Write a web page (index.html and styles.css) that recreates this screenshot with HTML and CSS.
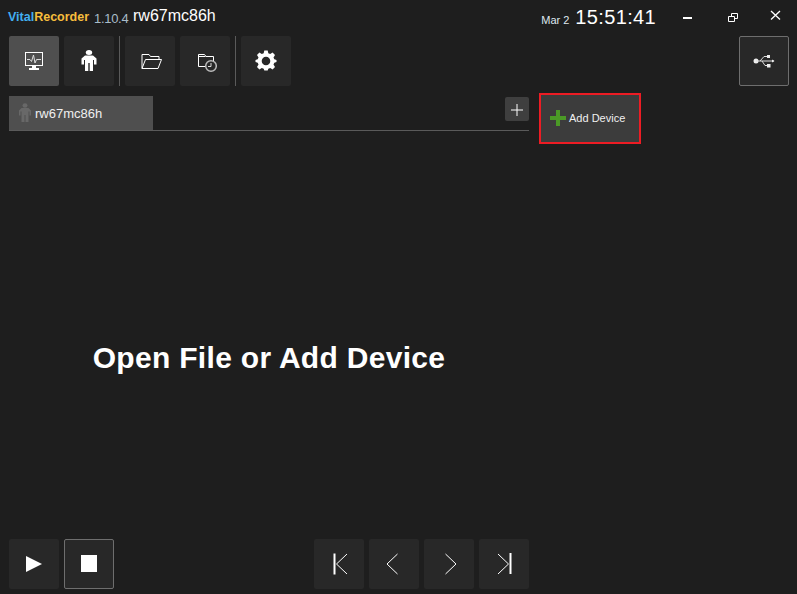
FILE: index.html
```html
<!DOCTYPE html>
<html lang="en">
<head>
<meta charset="utf-8">
<title>VitalRecorder</title>
<link rel="stylesheet" href="styles.css">
</head>
<body>
<div class="app">
  <header class="titlebar">
    <div class="brand">
      <span class="logo"><span class="logo-vital">Vital</span><span class="logo-recorder">Recorder</span></span>
      <span class="version">1.10.4</span>
      <span class="bedname">rw67mc86h</span>
    </div>
    <div class="clock">
      <span class="date">Mar 2</span>
      <span class="time">15:51:41</span>
    </div>
    <div class="winctl">
      <svg class="win" width="14" height="14" viewBox="0 0 14 14"><rect x="1" y="8" width="9" height="2" fill="#fff"/></svg>
      <svg class="win" width="14" height="14" viewBox="0 0 14 14"><path d="M6.500 7V4.500H12.500V9.500H9.500M3.500 7.500H9.500V12.500H3.500Z" fill="none" stroke="#fff" stroke-width="1"/></svg>
      <svg class="win" width="14" height="14" viewBox="0 0 14 14"><path d="M3 2L12 10.500M12 2L3 10.500" stroke="#fff" stroke-width="1.300"/></svg>
    </div>
  </header>

  <nav class="toolbar">
    <button class="btn btn-active">
      <svg width="24" height="24" viewBox="0 0 24 24"><rect x="3.500" y="3.500" width="17" height="13" fill="none" stroke="#fff"/><path d="M5 10.500H8L9.500 12.500L11.500 6L13 14L14.500 10.500H19" fill="none" stroke="#ddd"/><rect x="10" y="17" width="4" height="2" fill="#fff"/><rect x="7" y="19" width="10" height="2" fill="#fff"/></svg>
    </button>
    <button class="btn">
      <svg width="24" height="24" viewBox="0 0 24 24"><ellipse cx="12" cy="3.500" rx="3.200" ry="2.500" fill="#fff"/><path d="M8 6.500H16L19.500 9.500V15.500H17V11H16V22H12.700V14H11.300V22H8V11H7V15.500H4.500V9.500Z" fill="#fff"/></svg>
    </button>
    <span class="sep"></span>
    <button class="btn">
      <svg width="24" height="24" viewBox="0 0 24 24"><path d="M4 19.500V5.500H11L12.500 7.500H21V10.500M4 19.500H20L23.500 10.500H7.500L4 19.500Z" fill="none" stroke="#fff"/></svg>
    </button>
    <button class="btn">
      <svg width="24" height="24" viewBox="0 0 24 24"><path d="M15 17.500H5.500V5.500H11.500L13 7.500H20.500V12" fill="none" stroke="#fff"/><path d="M5.500 7.500H12.500" stroke="#fff"/><circle cx="18" cy="17" r="5.300" fill="#282828" stroke="#bbb" stroke-width="1.500"/><path d="M18 14V17.500H15" fill="none" stroke="#ddd"/></svg>
    </button>
    <span class="sep"></span>
    <button class="btn">
      <svg width="24" height="24" viewBox="0 0 24 24"><path fill="#fff" fill-rule="evenodd" d="M10.300 2.500H13.700L14.300 5.300L16.200 6.100L18.600 4.600L21 7L19.500 9.400L20.300 11.300L22.500 12V14L20.300 14.700L19.500 16.600L21 19L18.600 21.400L16.200 19.900L14.300 20.700L13.700 22.500H10.300L9.700 20.700L7.800 19.900L5.400 21.400L3 19L4.500 16.600L3.700 14.700L1.500 14V12L3.700 11.300L4.500 9.400L3 7L5.400 4.600L7.800 6.100L9.700 5.300ZM12 8.700A4.300 4.300 0 1 0 12 17.300A4.300 4.300 0 1 0 12 8.700Z" transform="translate(0 -1)"/></svg>
    </button>
    <button class="btn btn-outline btn-usb">
      <svg width="22" height="14" viewBox="0 0 22 14"><circle cx="3" cy="7" r="2.500" fill="#eee"/><path d="M3 7H21M7 7L11 2.500H14M9 7L12 11.500H15" fill="none" stroke="#ddd"/><rect x="14" y="1" width="3" height="3" fill="#eee"/><rect x="14" y="10" width="3.500" height="3.500" fill="#eee"/><path d="M19 5.500L21.500 7L19 8.500Z" fill="#eee"/></svg>
    </button>
  </nav>

  <main class="workspace">
    <section class="stage">
      <div class="tabs">
        <div class="tab">
          <svg class="tab-icon" width="14" height="20" viewBox="0 0 14 20"><ellipse cx="7" cy="2.500" rx="2.500" ry="2.300" fill="#686868"/><path d="M3.500 5H10.500L13 7.500V12.500H11.500V8.500H10.500V19H7.500V12H6.500V19H3.500V8.500H2.500V12.500H1V7.500Z" fill="#686868"/></svg>
          <span>rw67mc86h</span>
        </div>
        <button class="tab-add">
          <svg width="12" height="12" viewBox="0 0 12 12"><path d="M6 0V12M0 6H12" stroke="#fff"/></svg>
        </button>
      </div>
      <div class="message">Open File or Add Device</div>
    </section>
    <aside class="side">
      <button class="add-device">
        <svg width="16" height="16" viewBox="0 0 16 16"><path d="M6 0H10V6H16V10H10V16H6V10H0V6H6Z" fill="#4b9a26"/></svg>
        <span>Add Device</span>
      </button>
    </aside>
  </main>

  <footer class="transport">
    <div class="group">
      <button class="btn">
        <svg width="18" height="18" viewBox="0 0 18 18"><path d="M1 1L17 9L1 17Z" fill="#fff"/></svg>
      </button>
      <button class="btn btn-outline">
        <svg width="16" height="18" viewBox="0 0 16 18"><rect width="16" height="17" fill="#fff"/></svg>
      </button>
    </div>
    <div class="group">
      <button class="btn">
        <svg class="nudge-right" width="16" height="24" viewBox="0 0 16 24"><path d="M1.500 1.500V22.500" stroke="#fff" stroke-width="2"/><path d="M14 2L3.500 12L14 22" fill="none" stroke="#fff"/></svg>
      </button>
      <button class="btn">
        <svg class="nudge-left" width="14" height="24" viewBox="0 0 14 24"><path d="M12.500 2L2 12L12.500 22" fill="none" stroke="#fff"/></svg>
      </button>
      <button class="btn">
        <svg class="nudge-right" width="14" height="24" viewBox="0 0 14 24"><path d="M1.500 2L12 12L1.500 22" fill="none" stroke="#fff"/></svg>
      </button>
      <button class="btn">
        <svg width="16" height="24" viewBox="0 0 16 24"><path d="M14.500 1V22" stroke="#fff" stroke-width="2"/><path d="M2 2L12.500 12L2 22" fill="none" stroke="#fff"/></svg>
      </button>
    </div>
  </footer>
</div>
</body>
</html>
```

FILE: styles.css
```css
* { box-sizing: border-box; }
html, body { margin: 0; height: 100%; }
body {
  background: #1e1e1e;
  color: #fff;
  font-family: "Liberation Sans", Arial, sans-serif;
  overflow: hidden;
}
button { font: inherit; color: inherit; margin: 0; }

.app {
  width: 797px;
  height: 594px;
  display: flex;
  flex-direction: column;
  padding: 0 8px 5px 9px;
}

.titlebar {
  height: 36px;
  display: flex;
  align-items: flex-start;
}
.brand {
  display: flex;
  align-items: baseline;
  height: 30px;
  padding-top: 7px;
  margin-left: -1px;
}
.logo { font-size: 12.5px; font-weight: 700; width: 86px; }
.logo-vital { color: #42aef0; }
.logo-recorder { color: #f7bd3c; }
.version {
  font-size: 13px;
  letter-spacing: -0.3px;
  color: #a9bcc9;
  width: 39px;
  transform: translateY(2px);
}
.bedname { font-size: 16px; color: #fff; }

.clock {
  margin-left: auto;
  display: flex;
  align-items: baseline;
  gap: 6px;
  padding-top: 6px;
  margin-right: 26px;
}
.date { font-size: 11px; color: #dfe8ee; }
.time { font-size: 20px; color: #fff; letter-spacing: 0.35px; }

.winctl {
  display: flex;
  gap: 29px;
  padding-top: 9px;
  margin-right: 7px;
}
.win { display: block; }

.toolbar {
  display: flex;
  align-items: center;
  gap: 5px;
  height: 50px;
}
.sep {
  width: 1px;
  height: 50px;
  background: #5a5a5a;
}
.btn {
  width: 50px;
  height: 50px;
  flex: none;
  padding: 0;
  border: 0;
  border-radius: 2px;
  background: #282828;
  display: flex;
  align-items: center;
  justify-content: center;
}
.btn-active { background: #4f4f4f; }
.btn-outline { border: 1px solid #6e6e6e; }
.btn-usb { margin-left: auto; }
.nudge-right { margin-left: 4px; }
.nudge-left { margin-right: 4px; }

.workspace {
  flex: 1;
  display: flex;
  min-height: 0;
}
.stage {
  width: 520px;
  display: flex;
  flex-direction: column;
  padding-top: 10px;
}
.tabs {
  height: 35px;
  display: flex;
  justify-content: space-between;
  align-items: flex-start;
  border-bottom: 1px solid #5a5a5a;
}
.tab {
  width: 144px;
  height: 34px;
  background: #4f4f4f;
  display: flex;
  align-items: center;
  gap: 3px;
  padding-left: 9px;
  font-size: 13px;
  color: #f0f0f0;
}
.tab-icon { flex: none; }
.tab-add {
  width: 24px;
  height: 24px;
  margin-top: 1px;
  padding: 1px 0 0;
  border: 0;
  border-radius: 2px;
  background: #3f3f3f;
  display: flex;
  align-items: center;
  justify-content: center;
}
.message {
  flex: 1;
  padding-top: 210px;
  text-align: center;
  font-size: 30px;
  letter-spacing: 0.3px;
  font-weight: 700;
  line-height: 34px;
  color: #fff;
}
.side {
  padding: 7px 0 0 10px;
}
.add-device {
  width: 102px;
  height: 51px;
  padding: 0 0 2px 9px;
  border: 2px solid #ed1c24;
  background: #3c3c3c;
  display: flex;
  align-items: center;
  gap: 3px;
  font-size: 11px;
  color: #f0f0f0;
}
.transport {
  display: flex;
  gap: 200px;
  height: 50px;
}
.group { display: flex; gap: 5px; }
```
